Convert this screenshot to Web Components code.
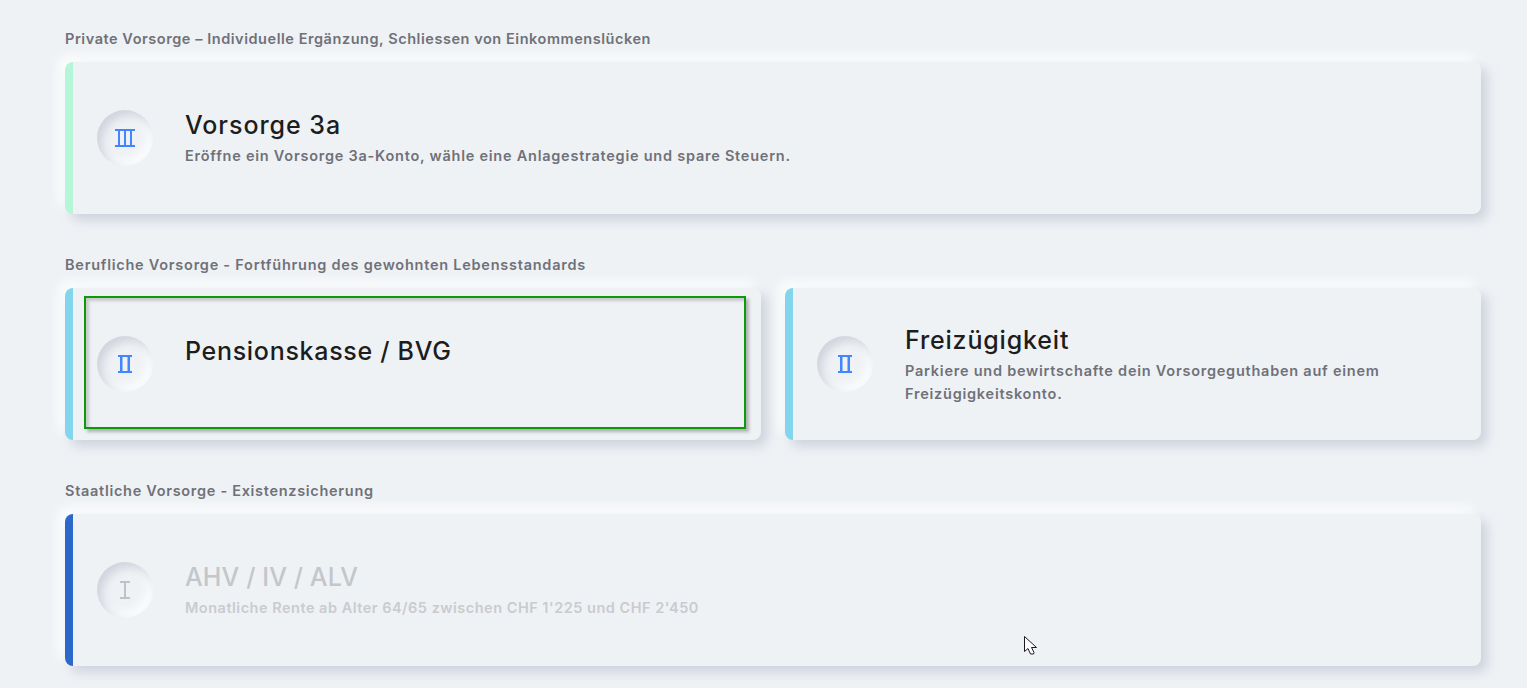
<!DOCTYPE html>
<html lang="de">
<head>
<meta charset="utf-8">
<title>Vorsorge</title>
<style>
  html, body { margin: 0; height: 100%; overflow: hidden; }
  body {
    background: #eff2f5;
    font-family: Inter, "Noto Sans", sans-serif;
    padding: 29px 46px 0 65px;
    box-sizing: border-box;
    position: relative;
  }
</style>
</head>
<body>
<vorsorge-section label="Private Vorsorge – Individuelle Ergänzung, Schliessen von Einkommenslücken" spacing="0.55px">
  <vorsorge-card accent="#b5f5d8" level="3" title-text="Vorsorge 3a" title-spacing="0.95px" text-spacing="0.76px">
    Eröffne ein Vorsorge 3a-Konto, wähle eine Anlagestrategie und spare Steuern.
  </vorsorge-card>
</vorsorge-section>
<vorsorge-section label="Berufliche Vorsorge - Fortführung des gewohnten Lebensstandards" spacing="0.75px" columns="2">
  <vorsorge-card accent="#82d5ec" level="2" title-text="Pensionskasse / BVG" title-spacing="0.7px" highlighted></vorsorge-card>
  <vorsorge-card accent="#82d5ec" level="2" title-text="Freizügigkeit" title-spacing="0.83px" text-spacing="0.76px">
    Parkiere und bewirtschafte dein Vorsorgeguthaben auf einem Freizügigkeitskonto.
  </vorsorge-card>
</vorsorge-section>
<vorsorge-section label="Staatliche Vorsorge - Existenzsicherung" spacing="0.7px">
  <vorsorge-card accent="#2b68c9" level="1" title-text="AHV / IV / ALV" title-spacing="0.1px" text-spacing="0.5px" disabled>
    Monatliche Rente ab Alter 64/65 zwischen CHF 1'225 und CHF 2'450
  </vorsorge-card>
</vorsorge-section>
<mouse-pointer></mouse-pointer>

<script>
class VorsorgeSection extends HTMLElement {
  constructor() {
    super();
    this.attachShadow({ mode: 'open' });
  }

  connectedCallback() {
    const cols = this.getAttribute('columns') || 1;
    this.shadowRoot.innerHTML = `
      <style>
        :host { display: block; margin-bottom: 41px; }
        h2 {
          margin: 0 0 13px;
          font-size: 14.5px;
          line-height: 20px;
          font-weight: 600;
          color: #6f7179;
          letter-spacing: ${this.getAttribute('spacing') || 0};
        }
        .cards { display: grid; grid-template-columns: repeat(${cols}, 1fr); gap: 24px; }
      </style>
      <h2>${this.getAttribute('label')}</h2>
      <div class="cards"><slot></slot></div>
    `;
  }
}

class VorsorgeCard extends HTMLElement {
  constructor() {
    super();
    this.attachShadow({ mode: 'open' });
  }

  connectedCallback() {
    const level = Number(this.getAttribute('level'));
    const disabled = this.hasAttribute('disabled');
    this.shadowRoot.innerHTML = `
      <style>
        :host {
          display: flex;
          align-items: center;
          gap: 32px;
          position: relative;
          box-sizing: border-box;
          height: 152px;
          padding-left: 24px;
          padding-right: 24px;
          background: #eff2f5;
          border-left: 8px solid ${this.getAttribute('accent')};
          border-radius: 8px;
          box-shadow: 6px 6px 12px rgba(176, 182, 200, .55), -6px -6px 12px rgba(255, 255, 255, .9);
        }
        .text { flex: 1; min-width: 0; padding-bottom: 3px; }
        h3 {
          margin: 0;
          font-size: 25px;
          line-height: 38px;
          font-weight: 500;
          color: ${disabled ? '#c4c6ca' : '#1d1d20'};
          letter-spacing: ${this.getAttribute('title-spacing') || 0};
        }
        p {
          margin: 0;
          min-height: 23px;
          font-size: 14.5px;
          line-height: 23px;
          font-weight: 600;
          color: ${disabled ? '#c9cbcf' : '#6f7179'};
          letter-spacing: ${this.getAttribute('text-spacing') || 0};
        }
        .highlight {
          position: absolute;
          left: 11px;
          right: 15px;
          top: 8px;
          bottom: 11px;
          border: 2px solid #0a9a0a;
          box-shadow: 3px 3px 3px rgba(80, 80, 80, .4), inset 3px 3px 3px rgba(80, 80, 80, .25);
          pointer-events: none;
        }
      </style>
      <numeral-badge level="${level}" ${disabled ? 'muted' : ''}></numeral-badge>
      <div class="text">
        <h3>${this.getAttribute('title-text')}</h3>
        <p><slot></slot></p>
      </div>
      ${this.hasAttribute('highlighted') ? '<div class="highlight"></div>' : ''}
    `;
  }
}

class NumeralBadge extends HTMLElement {
  constructor() {
    super();
    this.attachShadow({ mode: 'open' });
  }

  connectedCallback() {
    const level = Number(this.getAttribute('level'));
    const color = this.hasAttribute('muted') ? '#c0c2c6' : '#4285ff';
    // roman numeral: two serif bars plus one post per level
    const w = level === 3 ? 20 : level === 2 ? 14 : 10;
    const xs = level === 3 ? [3, 9, 15] : level === 2 ? [2, 9.5] : [4];
    const pw = level === 2 ? 2.5 : 2;
    const posts = xs.map(x => `<rect x="${x}" y="1" width="${pw}" height="16"/>`).join('');
    this.shadowRoot.innerHTML = `
      <style>
        :host {
          flex: none;
          display: flex;
          align-items: center;
          justify-content: center;
          width: 56px;
          height: 56px;
          border-radius: 50%;
          background: #eff2f5;
          box-shadow: inset 5px 5px 10px #d0d3dd, inset -5px -5px 10px #fbfcfe;
        }
        svg { display: block; }
      </style>
      <svg width="${w}" height="18" viewBox="0 0 ${w} 18" fill="${color}">
        <rect x="0" y="0" width="${w}" height="2"/>
        <rect x="0" y="16" width="${w}" height="2"/>
        ${posts}
      </svg>
    `;
  }
}

class MousePointer extends HTMLElement {
  constructor() {
    super();
    this.attachShadow({ mode: 'open' });
  }

  connectedCallback() {
    this.shadowRoot.innerHTML = `
      <style>
        :host { position: absolute; left: 1024px; top: 636px; width: 14px; height: 20px; }
        svg { display: block; }
      </style>
      <svg width="14" height="20" viewBox="0 0 14 20">
        <path d="M.5.5V15.5L4 12.5L6.5 18H9.5L10 16.5L7.5 11.5H12.5Z" fill="#fff" stroke="#1b1b22" stroke-width="1"/>
      </svg>
    `;
  }
}

customElements.define('vorsorge-section', VorsorgeSection);
customElements.define('vorsorge-card', VorsorgeCard);
customElements.define('numeral-badge', NumeralBadge);
customElements.define('mouse-pointer', MousePointer);
</script>
</body>
</html>
